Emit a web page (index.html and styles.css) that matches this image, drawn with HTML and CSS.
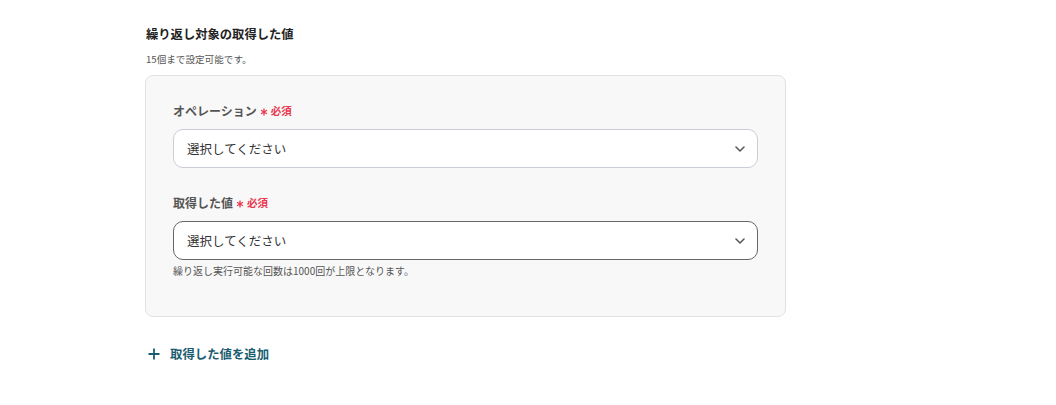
FILE: index.html
```html
<!DOCTYPE html>
<html lang="ja">
<head>
<meta charset="utf-8">
<link rel="stylesheet" href="styles.css">
</head>
<body>
<div class="wrap">
  <h2 class="title">繰り返し対象の取得した値</h2>
  <p class="sub">15個まで設定可能です。</p>
  <div class="panel">
    <div class="field">
      <div class="label">オペレーション<span class="req"><svg class="ast" width="8" height="8" viewBox="0 0 8 8"><path d="M4 0.5 V7.5 M1 2.2 L7 5.8 M1 5.8 L7 2.2" stroke="#e8374f" stroke-width="1.3"/></svg>必須</span></div>
      <div class="select">
        <span>選択してください</span>
        <svg class="chev" width="10" height="6" viewBox="0 0 10 6"><path d="M1 1 L5 5 L9 1" fill="none" stroke="#5a5a5a" stroke-width="1.6" stroke-linecap="round" stroke-linejoin="round"/></svg>
      </div>
    </div>
    <div class="field">
      <div class="label">取得した値<span class="req"><svg class="ast" width="8" height="8" viewBox="0 0 8 8"><path d="M4 0.5 V7.5 M1 2.2 L7 5.8 M1 5.8 L7 2.2" stroke="#e8374f" stroke-width="1.3"/></svg>必須</span></div>
      <div class="select active">
        <span>選択してください</span>
        <svg class="chev" width="10" height="6" viewBox="0 0 10 6"><path d="M1 1 L5 5 L9 1" fill="none" stroke="#5a5a5a" stroke-width="1.6" stroke-linecap="round" stroke-linejoin="round"/></svg>
      </div>
      <p class="help">繰り返し実行可能な回数は1000回が上限となります。</p>
    </div>
  </div>
  <div class="add">
    <svg width="12" height="12" viewBox="0 0 12 12"><path d="M6 0.5 V11.5 M0.5 6 H11.5" stroke="#1b5d70" stroke-width="1.8"/></svg>
    <span>取得した値を追加</span>
  </div>
</div>
</body>
</html>
```
FILE: styles.css
```css
* { box-sizing: border-box; }
body {
  margin: 0;
  background: #fff;
  font-family: "Noto Sans CJK JP", "Noto Sans", sans-serif;
  color: #333;
}
.wrap {
  padding: 24px 0 0 145px;
  width: 786px;
}
.title {
  margin: 0 0 0 1px;
  font-size: 12.3px;
  line-height: 20px;
  font-weight: 700;
  color: #222;
}
.sub {
  margin: 7px 0 0 1px;
  font-size: 9.6px;
  line-height: 16px;
  color: #555;
}
.panel {
  margin-top: 8px;
  width: 641px;
  background: #f8f8f8;
  border: 1px solid #e2e2e2;
  border-radius: 8px;
  padding: 26px 27px 38px 27px;
  display: flex;
  flex-direction: column;
  gap: 26px;
}
.label {
  font-size: 12px;
  line-height: 18px;
  font-weight: 700;
  color: #555;
  display: flex;
  align-items: center;
}
.req {
  color: #e8374f;
  font-size: 10.5px;
  margin-left: 3px;
  display: flex;
  align-items: center;
}
.ast {
  display: block;
  margin-right: 3px;
  position: relative;
  top: 1px;
}
.select {
  margin-top: 9px;
  height: 39px;
  background: #fff;
  border: 1px solid #c9ced6;
  border-radius: 10px;
  display: flex;
  align-items: center;
  justify-content: space-between;
  padding: 0 12px 0 13px;
  font-size: 12.5px;
  color: #333;
}
.select.active {
  border-color: #666;
}
.chev { display: block; }
.help {
  margin: 4px 0 0 0;
  font-size: 10px;
  line-height: 14px;
  color: #555;
}
.add {
  margin-top: 27px;
  display: flex;
  align-items: center;
  gap: 10px;
  padding-left: 3px;
  font-size: 12.4px;
  line-height: 20px;
  font-weight: 700;
  color: #1b5d70;
}
.add svg { display: block; }
```
